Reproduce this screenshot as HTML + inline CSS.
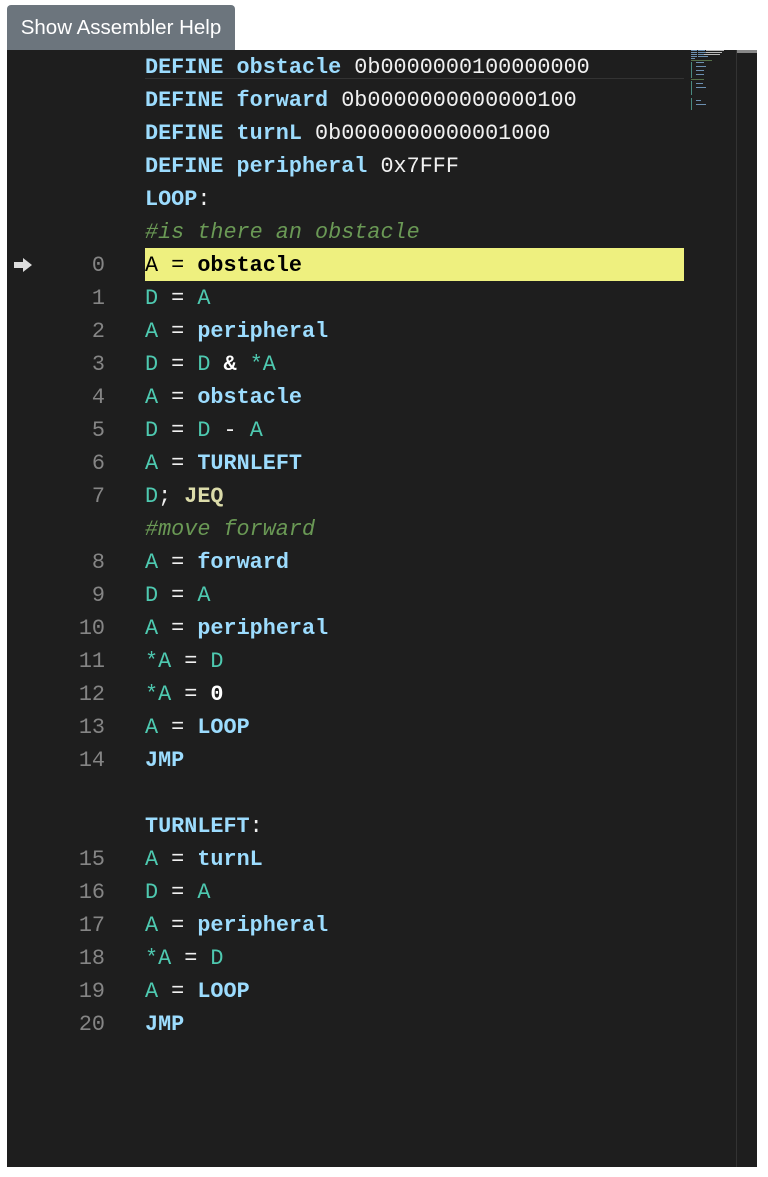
<!DOCTYPE html>
<html><head><style>
body{margin:0;background:#fff;width:768px;height:1177px;overflow:hidden;position:relative;font-family:"Liberation Sans",sans-serif}
.btn{position:absolute;left:7px;top:5px;width:228px;height:45px;background:#6c757d;color:#fff;border-radius:4px 4px 0 0;font-size:20.5px;line-height:46px;text-align:center;box-sizing:border-box}
.ed{position:absolute;left:7px;top:50px;width:750px;height:1117px;background:#1e1e1e}
.sb{position:absolute;left:729px;top:0;width:1px;height:1117px;background:#333}
.sbt{position:absolute;left:730px;top:0;width:20px;height:3px;background:#888}
.l{position:absolute;left:0;height:33px;line-height:35px;font-family:"Liberation Mono",monospace;font-size:21.8px;white-space:pre;color:#f0f0f0;width:677px}
.n{position:absolute;right:579px;color:#858585}
.c{position:absolute;left:138px}
.k{color:#9cdcfe;font-weight:bold}
.r{color:#4ec9b0}
.m{color:#6a9955;font-style:italic}
.j{color:#dcdcaa;font-weight:bold}
.w{color:#fff;font-weight:bold}
.hl{position:absolute;left:138px;top:198px;width:539px;height:33px;background:#eef07f}
.cur{position:absolute;left:138px;top:28px;width:539px;height:3px;border-top:1px solid #333}
</style></head><body>
<div class="btn">Show Assembler Help</div>
<div class="ed">
<div class="sb"></div><div class="sbt"></div>
<div class="cur"></div>
<div class="hl"></div>
<svg style="position:absolute;left:6px;top:208px" width="20" height="14"><path d="M1 4h9V0l9 7-9 7V10H1z" fill="#ddd"/></svg>
<div class="l" style="top:0"><span class="c"><span class="k">DEFINE obstacle</span> 0b0000000100000000</span></div>
<div class="l" style="top:33px"><span class="c"><span class="k">DEFINE forward</span> 0b0000000000000100</span></div>
<div class="l" style="top:66px"><span class="c"><span class="k">DEFINE turnL</span> 0b0000000000001000</span></div>
<div class="l" style="top:99px"><span class="c"><span class="k">DEFINE peripheral</span> 0x7FFF</span></div>
<div class="l" style="top:132px"><span class="c"><span class="k">LOOP</span>:</span></div>
<div class="l" style="top:165px"><span class="c m">#is there an obstacle</span></div>
<div class="l" style="top:198px"><span class="n">0</span><span class="c" style="color:#000">A = <b>obstacle</b></span></div>
<div class="l" style="top:231px"><span class="n">1</span><span class="c"><span class="r">D</span> = <span class="r">A</span></span></div>
<div class="l" style="top:264px"><span class="n">2</span><span class="c"><span class="r">A</span> = <span class="k">peripheral</span></span></div>
<div class="l" style="top:297px"><span class="n">3</span><span class="c"><span class="r">D</span> = <span class="r">D</span> <span class="w">&amp;</span> <span class="r">*A</span></span></div>
<div class="l" style="top:330px"><span class="n">4</span><span class="c"><span class="r">A</span> = <span class="k">obstacle</span></span></div>
<div class="l" style="top:363px"><span class="n">5</span><span class="c"><span class="r">D</span> = <span class="r">D</span> - <span class="r">A</span></span></div>
<div class="l" style="top:396px"><span class="n">6</span><span class="c"><span class="r">A</span> = <span class="k">TURNLEFT</span></span></div>
<div class="l" style="top:429px"><span class="n">7</span><span class="c"><span class="r">D</span>; <span class="j">JEQ</span></span></div>
<div class="l" style="top:462px"><span class="c m">#move forward</span></div>
<div class="l" style="top:495px"><span class="n">8</span><span class="c"><span class="r">A</span> = <span class="k">forward</span></span></div>
<div class="l" style="top:528px"><span class="n">9</span><span class="c"><span class="r">D</span> = <span class="r">A</span></span></div>
<div class="l" style="top:561px"><span class="n">10</span><span class="c"><span class="r">A</span> = <span class="k">peripheral</span></span></div>
<div class="l" style="top:594px"><span class="n">11</span><span class="c"><span class="r">*A</span> = <span class="r">D</span></span></div>
<div class="l" style="top:627px"><span class="n">12</span><span class="c"><span class="r">*A</span> = <span class="w">0</span></span></div>
<div class="l" style="top:660px"><span class="n">13</span><span class="c"><span class="r">A</span> = <span class="k">LOOP</span></span></div>
<div class="l" style="top:693px"><span class="n">14</span><span class="c"><span class="k">JMP</span></span></div>
<div class="l" style="top:759px"><span class="c"><span class="k">TURNLEFT</span>:</span></div>
<div class="l" style="top:792px"><span class="n">15</span><span class="c"><span class="r">A</span> = <span class="k">turnL</span></span></div>
<div class="l" style="top:825px"><span class="n">16</span><span class="c"><span class="r">D</span> = <span class="r">A</span></span></div>
<div class="l" style="top:858px"><span class="n">17</span><span class="c"><span class="r">A</span> = <span class="k">peripheral</span></span></div>
<div class="l" style="top:891px"><span class="n">18</span><span class="c"><span class="r">*A</span> = <span class="r">D</span></span></div>
<div class="l" style="top:924px"><span class="n">19</span><span class="c"><span class="r">A</span> = <span class="k">LOOP</span></span></div>
<div class="l" style="top:957px"><span class="n">20</span><span class="c"><span class="k">JMP</span></span></div>
<svg style="position:absolute;left:684px;top:0" width="40" height="60">
<g fill="#6b8fb0"><rect x="0" y="0" width="6" height="1"/><rect x="7" y="0" width="7" height="1"/><rect x="0" y="2" width="6" height="1"/><rect x="7" y="2" width="14" height="1"/><rect x="0" y="4" width="6" height="1"/><rect x="7" y="4" width="12" height="1"/><rect x="0" y="6" width="6" height="1"/><rect x="7" y="6" width="10" height="1"/><rect x="0" y="8" width="4" height="1"/></g>
<g fill="#bbb"><rect x="15" y="0" width="18" height="1"/><rect x="15" y="2" width="16" height="1"/><rect x="13" y="4" width="16" height="1"/></g>
<g fill="#55704a"><rect x="0" y="10" width="21" height="1"/><rect x="0" y="29" width="13" height="1"/></g>
<g fill="#4a8a80"><rect x="0" y="12" width="1" height="16"/><rect x="0" y="31" width="1" height="14"/><rect x="0" y="48" width="1" height="12"/></g>
<g fill="#6b8fb0"><rect x="5" y="12" width="8" height="1"/><rect x="5" y="16" width="10" height="1"/><rect x="5" y="20" width="8" height="1"/><rect x="5" y="24" width="8" height="1"/><rect x="5" y="33" width="7" height="1"/><rect x="5" y="37" width="10" height="1"/><rect x="5" y="50" width="5" height="1"/><rect x="5" y="54" width="10" height="1"/></g>
</svg>
</div>
</body></html>
